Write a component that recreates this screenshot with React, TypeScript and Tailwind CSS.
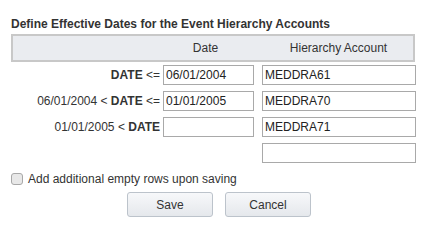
import React from "react";

const font = { fontFamily: '"Liberation Sans", Arial, sans-serif' };

function Row({ label, date, account }: { label?: React.ReactNode; date?: string | null; account: string }) {
  return (
    <div className="flex h-[20px] items-center">
      <div className="w-[149px] text-right text-[12px] leading-[14px] text-[#333] whitespace-nowrap">{label}</div>
      {date !== null ? (
        <input
          readOnly
          value={date}
          className="ml-[3px] h-[20px] w-[91px] border border-[#a9a9a9] bg-white px-[2px] text-[12px] text-[#222] outline-none"
          style={font}
        />
      ) : (
        <div className="ml-[3px] w-[91px]" />
      )}
      <input
        readOnly
        value={account}
        className="ml-[8px] h-[20px] w-[154px] border border-[#a9a9a9] bg-white px-[2px] text-[12px] text-[#222] outline-none"
        style={font}
      />
    </div>
  );
}

export default function App() {
  return (
    <div className="w-[427px] h-[241px] bg-white pl-[11px] pt-[17px]" style={font}>
      <div className="text-[12px] leading-[14px] font-bold text-[#333]">
        Define Effective Dates for the Event Hierarchy Accounts
      </div>
      <div className="mt-[3px] flex h-[28px] w-[404px] items-center border-2 border-[#c8c8c8] bg-[#eaecf0] text-[12px] leading-[14px] text-[#333]">
        <div className="w-[140px]" />
        <div className="w-[105px] text-center">Date</div>
        <div className="flex-1 pl-[6px] text-center">Hierarchy Account</div>
      </div>
      <div className="mt-[3px] flex flex-col gap-[6px]">
        <Row
          label={
            <>
              <b>DATE</b> &lt;=
            </>
          }
          date="06/01/2004"
          account="MEDDRA61"
        />
        <Row
          label={
            <>
              06/01/2004 &lt; <b>DATE</b> &lt;=
            </>
          }
          date="01/01/2005"
          account="MEDDRA70"
        />
        <Row
          label={
            <>
              01/01/2005 &lt; <b>DATE</b>
            </>
          }
          date=""
          account="MEDDRA71"
        />
        <Row label="" date={null} account="" />
      </div>
      <label className="mt-[9px] flex h-[14px] items-center text-[12px] leading-[14px] text-[#333]">
        <span className="h-[12px] w-[12px] rounded-[3px] border border-[#a8a8a8] bg-[#e8e8e8]" />
        <span className="ml-[5px]">Add additional empty rows upon saving</span>
      </label>
      <div className="mt-[6px] flex gap-[12px] pl-[116px]">
        <button
          className="h-[25px] w-[86px] rounded-[3px] border border-[#bcc3cb] bg-gradient-to-b from-[#f7f8fa] to-[#e5e8ec] text-[12px] text-[#333]"
          style={font}
        >
          Save
        </button>
        <button
          className="h-[25px] w-[86px] rounded-[3px] border border-[#bcc3cb] bg-gradient-to-b from-[#f7f8fa] to-[#e5e8ec] text-[12px] text-[#333]"
          style={font}
        >
          Cancel
        </button>
      </div>
    </div>
  );
}
